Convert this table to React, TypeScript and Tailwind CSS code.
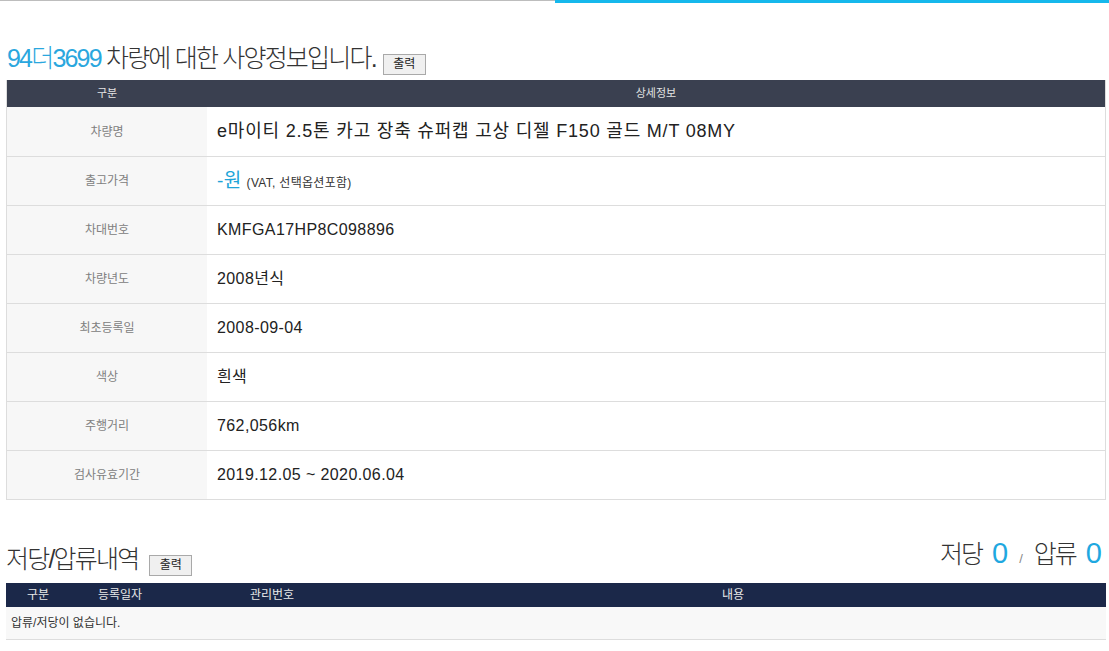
import React from "react";

const rows: { label: string; value: React.ReactNode }[] = [
  {
    label: "차량명",
    value: (
      <span className="text-[18px] tracking-[0.8px] text-[#222]">
        e마이티 2.5톤 카고 장축 슈퍼캡 고상 디젤 F150 골드 M/T 08MY
      </span>
    ),
  },
  {
    label: "출고가격",
    value: (
      <span className="flex items-baseline gap-[5px]">
        <span className="text-[19px] text-[#20a4d8]">-원</span>
        <span className="text-[12px] tracking-[0.3px] text-[#333]">(VAT, 선택옵션포함)</span>
      </span>
    ),
  },
  { label: "차대번호", value: "KMFGA17HP8C098896" },
  { label: "차량년도", value: "2008년식" },
  { label: "최초등록일", value: "2008-09-04" },
  { label: "색상", value: "흰색" },
  { label: "주행거리", value: "762,056km" },
  { label: "검사유효기간", value: "2019.12.05 ~ 2020.06.04" },
];

function PrintButton() {
  return (
    <button className="h-[21px] w-[43px] border border-[#a9a9a9] bg-[#f0f0f0] text-[12px] leading-none text-[#222]">
      출력
    </button>
  );
}

export default function App() {
  const font = { fontFamily: '"Liberation Sans", "Noto Sans CJK KR", sans-serif' };
  return (
    <div className="min-h-[651px] w-[1109px] bg-white" style={font}>
      {/* top tabs line */}
      <div className="flex h-[3px]">
        <div className="w-[555px] border-t border-[#bdbdbd]" />
        <div className="flex-1 bg-[#16b8ec]" />
      </div>

      <div className="pl-[6px] pr-[3px]">
        {/* spec title */}
        <div className="mt-[40px] flex items-end gap-[7px] pl-[1px]">
          <h2 className="text-[25px] font-light leading-[30px] tracking-[-1.8px] text-[#333]">
            <span className="text-[#2aa7de]">94더3699</span> 차량에 대한 사양정보입니다.
          </h2>
          <div className="mb-[-2px]">
            <PrintButton />
          </div>
        </div>

        {/* spec table */}
        <div className="mt-[7px] border border-[#dddddd] border-t-0">
          <div className="flex h-[27px] items-center bg-[#3a4050] text-[11px] text-[#e4e4e4]">
            <div className="w-[200px] text-center">구분</div>
            <div className="flex-1 text-center">상세정보</div>
          </div>
          {rows.map((r, i) => (
            <div
              key={r.label}
              className={`flex h-[49px] ${i > 0 ? "border-t border-[#dddddd]" : ""}`}
            >
              <div className="flex w-[200px] items-center justify-center bg-[#f7f7f7] text-[12px] text-[#808080]">
                {r.label}
              </div>
              <div className="flex flex-1 items-center pl-[10px] text-[16px] tracking-[0.4px] text-[#222]">
                {r.value}
              </div>
            </div>
          ))}
        </div>

        {/* mortgage section */}
        <div className="mt-[38px] flex items-end justify-between">
          <div className="flex items-end gap-[11px]">
            <h2 className="text-[25px] font-light leading-[30px] tracking-[-1.8px] text-[#333]">
              저당/압류내역
            </h2>
            <div className="mb-[-2px]">
              <PrintButton />
            </div>
          </div>
          <div className="flex items-baseline pr-[4px] leading-[30px] text-[#333]">
            <span className="text-[25px] font-light tracking-[-2px]">저당</span>
            <span className="ml-[10px] text-[29px] text-[#1fa8e0]">0</span>
            <span className="mx-[11px] text-[13px] text-[#888]">/</span>
            <span className="text-[25px] font-light tracking-[-2px]">압류</span>
            <span className="ml-[10px] text-[29px] text-[#1fa8e0]">0</span>
          </div>
        </div>

        <div className="mt-[9px]">
          <div className="flex h-[24px] items-center bg-[#1b2849] text-[12px] text-[#e8e8e8]">
            <div className="w-[64px] text-center">구분</div>
            <div className="w-[100px] text-center">등록일자</div>
            <div className="w-[204px] text-center">관리번호</div>
            <div className="w-[718px] text-center">내용</div>
            <div className="flex-1" />
          </div>
          <div className="flex h-[33px] items-center border-b border-[#dddddd] bg-[#f8f8f8] pl-[5px] text-[12px] text-[#333]">
            압류/저당이 없습니다.
          </div>
        </div>
      </div>
    </div>
  );
}
